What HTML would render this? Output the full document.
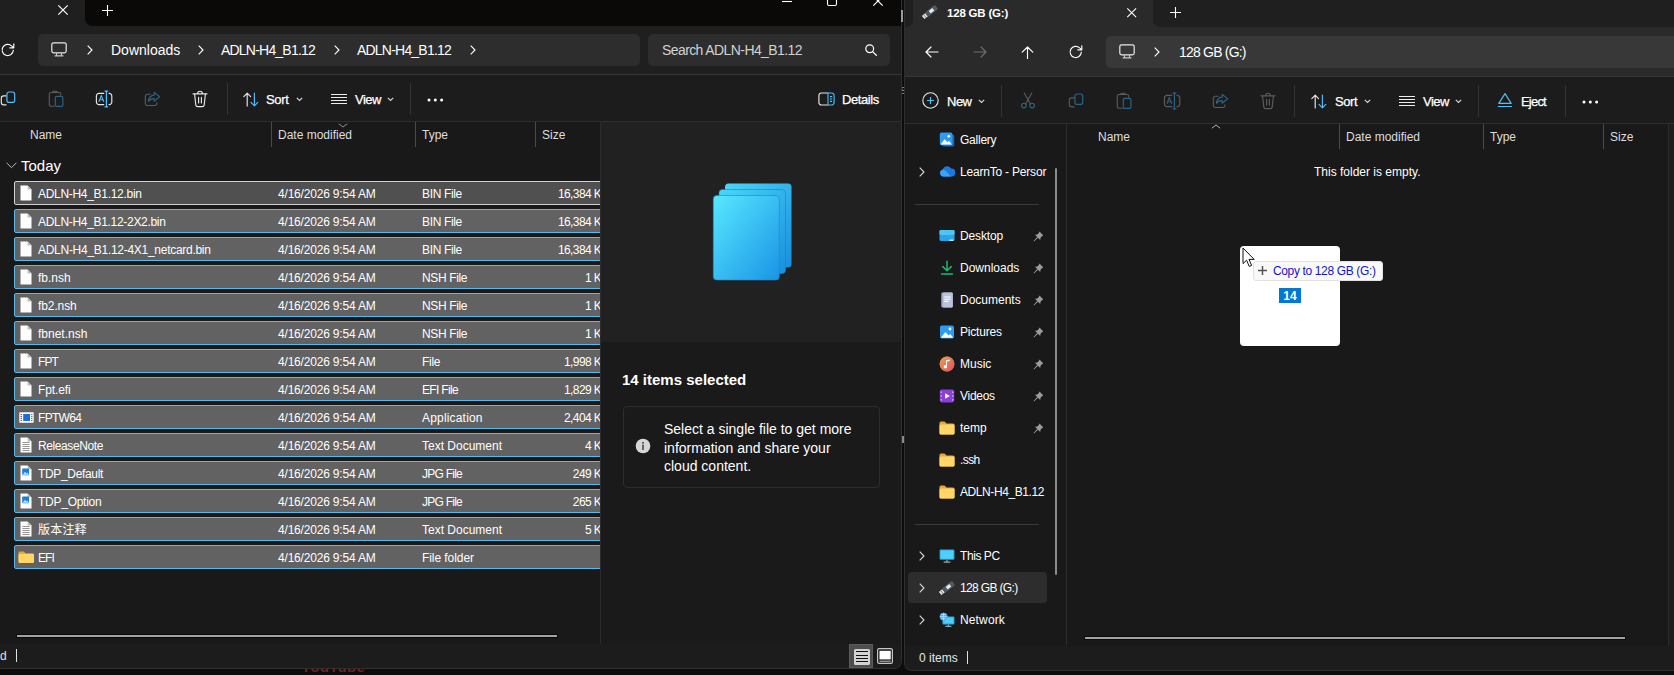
<!DOCTYPE html>
<html lang="en">
<head>
<meta charset="utf-8">
<title>File Explorer</title>
<style>
*{box-sizing:border-box;margin:0;padding:0}
html,body{width:1674px;height:675px;overflow:hidden;background:#0c0c0c}
body{position:relative;font-family:"Liberation Sans","Noto Sans CJK SC",sans-serif;font-size:12px;color:#fff;-webkit-font-smoothing:antialiased}
.a{position:absolute}
.t{position:absolute;white-space:nowrap;line-height:16px;height:16px}
svg{position:absolute;overflow:visible}
/* ---------- left window ---------- */
#L{position:absolute;left:0;top:0;width:902px;height:669px;background:#1f1f1f;overflow:hidden;border-right:1px solid #303030;border-bottom:1px solid #303030;border-bottom-right-radius:8px}
#L .titlebar{left:85px;top:0;width:816px;height:26px;background:#0b0907;border-bottom-left-radius:7px}
#L .addr{left:38px;top:34px;width:602px;height:32px;background:#2d2d2d;border-radius:5px}
#L .search{left:648px;top:34px;width:242px;height:32px;background:#2d2d2d;border-radius:5px}
#L .cmd{left:0;top:74px;width:901px;height:48px;background:#1c1c1c;border-top:1px solid #363636;border-bottom:1px solid #2e2e2e}
#L .list{left:0;top:122px;width:600px;height:522px;background:#191919}
#L .det1{left:601px;top:122px;width:300px;height:220px;background:#212121}
#L .det2{left:601px;top:342px;width:300px;height:302px;background:#1a1a1a}
#L .status{left:0;top:644px;width:901px;height:25px;background:#1c1c1c}
.bc{font-size:14px;line-height:18px;height:18px;color:#fff}
.hd{color:#dedede}
.sb{font-size:13px;-webkit-text-stroke:0.25px #fff}
.dt{font-size:14px;line-height:18px;height:18px;color:#fff}
.colsep{position:absolute;width:1px;background:#4a4a4a}
.row{position:absolute;left:14px;width:600px;height:24px;background:#626262;border:1px solid #58baee;border-radius:2px}
.row.first{background:#505050;border-color:#d0d0d0}
.row .t{top:4px}
.row .n{left:23px}
.row .d{left:263px;letter-spacing:-0.19px}
.row .ty{left:407px}
.row .s{right:4.4px;text-align:right;letter-spacing:-0.6px}
/* ---------- right window ---------- */
#R{position:absolute;left:904px;top:0;width:770px;height:671px;background:#2a2a2a;overflow:hidden;border-left:1px solid #2f2f2f;border-bottom:1px solid #2f2f2f;border-bottom-left-radius:8px}
#R .tabstrip{left:0;top:0;width:769px;height:27px;background:#1f1f1f}
#R .tab{left:8px;top:0;width:240px;height:27px;background:#2a2a2a}
#R .addr{left:201px;top:36px;width:580px;height:32px;background:#383838;border-radius:5px}
#R .cmd{left:0;top:76px;width:769px;height:48px;background:#1c1c1c;border-top:1px solid #363636;border-bottom:1px solid #2e2e2e}
#R .body{left:0;top:124px;width:769px;height:522px;background:#191919}
#R .status{left:0;top:646px;width:769px;height:27px;background:#1c1c1c}
.si{position:absolute;left:55px;white-space:nowrap;line-height:16px;height:16px;color:#fff}
</style>
</head>
<body>
<div class="t" style="left:301px;top:658px;font-size:15px;font-weight:bold;color:#7c1d1d;line-height:18px;height:18px;letter-spacing:0.3px">YouTube</div>
<!-- ======================= LEFT WINDOW ======================= -->
<div id="L">
  <div class="a titlebar"></div>
  <div class="a addr"></div>
  <div class="a search"></div>
  <div class="a cmd"></div>
  <div class="a list"></div>
  <div class="a det1"></div>
  <div class="a det2"></div>
  <div class="a status"></div>
    <!-- tab close + new tab -->
  <svg style="left:58px;top:5px" width="10" height="10" viewBox="0 0 10 10"><path d="M0.3 0.3L9.7 9.7M9.7 0.3L0.3 9.7" stroke="#fff" stroke-width="1.2" fill="none"/></svg>
  <svg style="left:102px;top:5px" width="11" height="11" viewBox="0 0 11 11"><path d="M5.5 0V11M0 5.5H11" stroke="#fff" stroke-width="1.1" fill="none"/></svg>
  <!-- window controls (partly cropped) -->
  <svg style="left:782px;top:0" width="10" height="4" viewBox="0 0 10 4"><path d="M0 1.5H10" stroke="#fff" stroke-width="1.1"/></svg>
  <svg style="left:827px;top:-4px" width="10" height="10" viewBox="0 0 10 10"><rect x="0.5" y="0.5" width="9" height="9" rx="1.6" stroke="#fff" stroke-width="1.1" fill="none"/></svg>
  <svg style="left:873px;top:-4px" width="10" height="10" viewBox="0 0 10 10"><path d="M0.3 0.3L9.7 9.7M9.7 0.3L0.3 9.7" stroke="#fff" stroke-width="1.2" fill="none"/></svg>
  <!-- refresh -->
  <svg style="left:1px;top:43px" width="14" height="14" viewBox="0 0 14 14"><path d="M12.3 7.2A5.6 5.6 0 1 1 10.6 2.9L12.6 4.6M12.8 0.8V4.8H8.8" stroke="#fff" stroke-width="1.15" fill="none" stroke-linecap="round" stroke-linejoin="round"/></svg>
  <!-- breadcrumb -->
  <svg style="left:51px;top:42px" width="16" height="15" viewBox="0 0 16 15"><rect x="0.8" y="0.8" width="14.4" height="10" rx="1.8" stroke="#e8e8e8" stroke-width="1.2" fill="none"/><path d="M5.5 11V13.6M10.5 11V13.6M3.6 13.9H12.4" stroke="#c8c8c8" stroke-width="1.1" fill="none"/></svg>
  <svg style="left:87px;top:45px" width="6" height="10" viewBox="0 0 6 10"><path d="M0.7 0.7L5 5L0.7 9.3" stroke="#fff" stroke-width="1.1" fill="none"/></svg>
  <div class="t bc" style="left:111px;top:41px">Downloads</div>
  <svg style="left:198px;top:45px" width="6" height="10" viewBox="0 0 6 10"><path d="M0.7 0.7L5 5L0.7 9.3" stroke="#fff" stroke-width="1.1" fill="none"/></svg>
  <div class="t bc" style="left:221px;top:41px;letter-spacing:-0.79px">ADLN-H4_B1.12</div>
  <svg style="left:334px;top:45px" width="6" height="10" viewBox="0 0 6 10"><path d="M0.7 0.7L5 5L0.7 9.3" stroke="#fff" stroke-width="1.1" fill="none"/></svg>
  <div class="t bc" style="left:357px;top:41px;letter-spacing:-0.79px">ADLN-H4_B1.12</div>
  <svg style="left:470px;top:45px" width="6" height="10" viewBox="0 0 6 10"><path d="M0.7 0.7L5 5L0.7 9.3" stroke="#fff" stroke-width="1.1" fill="none"/></svg>
  <!-- search -->
  <div class="t bc" style="left:662px;top:41px;color:#d2d2d2;letter-spacing:-0.59px">Search ADLN-H4_B1.12</div>
  <svg style="left:865px;top:44px" width="12" height="12" viewBox="0 0 12 12"><circle cx="4.7" cy="4.7" r="3.9" stroke="#fff" stroke-width="1.2" fill="none"/><path d="M7.6 7.6L11.3 11.3" stroke="#fff" stroke-width="1.3" stroke-linecap="round"/></svg>
  <!-- command bar icons -->
  <svg style="left:0;top:91px" width="16" height="16" viewBox="0 0 16 16"><path d="M6.5 13.8H3.6A2.3 2.3 0 0 1 1.3 11.5V7.2A2.3 2.3 0 0 1 3.6 4.9H6.5" stroke="#e6e6e6" stroke-width="1.15" fill="none"/><rect x="6.9" y="1" width="7.8" height="10.4" rx="2.2" stroke="#4cc2ff" stroke-width="1.2" fill="none"/></svg>
  <svg style="left:48px;top:90px" width="16" height="18" viewBox="0 0 16 18"><path d="M6.6 16.2H3A1.7 1.7 0 0 1 1.3 14.5V4.2A1.7 1.7 0 0 1 3 2.5H11A1.7 1.7 0 0 1 12.7 4.2V5.6" stroke="#5c5c5c" stroke-width="1.1" fill="none"/><path d="M4.6 2.3A1.2 1.2 0 0 1 5.8 1.3H8.2A1.2 1.2 0 0 1 9.4 2.3" stroke="#5c5c5c" stroke-width="1.1" fill="none"/><rect x="7.3" y="6.3" width="7.6" height="10" rx="1.4" stroke="#2b6485" stroke-width="1.15" fill="none"/></svg>
  <svg style="left:95px;top:90px" width="18" height="18" viewBox="0 0 18 18"><path d="M9.2 3.4H4A2.6 2.6 0 0 0 1.4 6V12A2.6 2.6 0 0 0 4 14.6H9.2M13.6 3.4H14.2A2.6 2.6 0 0 1 16.8 6V12A2.6 2.6 0 0 1 14.2 14.6H13.6" stroke="#e6e6e6" stroke-width="1.15" fill="none"/><path d="M11.4 1.2V16.8M9.6 1.2H13.2M9.6 16.8H13.2" stroke="#4cc2ff" stroke-width="1.2" fill="none"/><path d="M3.8 11.8L6.3 5.6L8.8 11.8M4.7 9.8H7.9" stroke="#4cc2ff" stroke-width="1.1" fill="none"/></svg>
  <svg style="left:144px;top:91px" width="17" height="16" viewBox="0 0 17 16"><path d="M6.4 3.2H3.4A2.1 2.1 0 0 0 1.3 5.3V12.4A2.1 2.1 0 0 0 3.4 14.5H10.8A2.1 2.1 0 0 0 12.9 12.4V11.6" stroke="#5c5c5c" stroke-width="1.1" fill="none"/><path d="M10.2 1.4L15.6 5.8L10.2 10.2V7.6C7.4 7.5 5.6 8.4 4.4 10.4C4.7 6.8 6.8 4.4 10.2 4.1Z" stroke="#2b6485" stroke-width="1.1" fill="none" stroke-linejoin="round"/></svg>
  <svg style="left:192px;top:90px" width="16" height="18" viewBox="0 0 16 18"><path d="M1 3.8H15M5.6 3.6A2.4 2.4 0 0 1 10.4 3.6M2.6 4.2L3.8 14.9A1.9 1.9 0 0 0 5.7 16.6H10.3A1.9 1.9 0 0 0 12.2 14.9L13.4 4.2M6.6 7.4V13M9.4 7.4V13" stroke="#e6e6e6" stroke-width="1.15" fill="none" stroke-linecap="round"/></svg>
  <div class="a" style="left:227px;top:83px;width:1px;height:32px;background:#333"></div>
  <!-- sort -->
  <svg style="left:243px;top:92px" width="16" height="15" viewBox="0 0 16 15"><path d="M4.2 14V1.2M0.8 4.6L4.2 1.2L7.6 4.6" stroke="#e6e6e6" stroke-width="1.15" fill="none" stroke-linecap="round" stroke-linejoin="round"/><path d="M11.4 1V13.8M8 10.4L11.4 13.8L14.8 10.4" stroke="#4cc2ff" stroke-width="1.15" fill="none" stroke-linecap="round" stroke-linejoin="round"/></svg>
  <div class="t sb" style="left:266px;top:92px;letter-spacing:-0.3px">Sort</div>
  <svg style="left:296px;top:97px" width="7" height="5" viewBox="0 0 7 5"><path d="M0.8 0.8L3.5 3.5L6.2 0.8" stroke="#d4d4d4" stroke-width="1.2" fill="none"/></svg>
  <!-- view -->
  <svg style="left:331px;top:94px" width="16" height="10" viewBox="0 0 16 10"><path d="M0 0.5H16M0 3.5H16M0 6.5H16M0 9.5H16" stroke="#ececec" stroke-width="1" fill="none"/></svg>
  <div class="t sb" style="left:355px;top:92px;letter-spacing:-0.5px">View</div>
  <svg style="left:387px;top:97px" width="7" height="5" viewBox="0 0 7 5"><path d="M0.8 0.8L3.5 3.5L6.2 0.8" stroke="#d4d4d4" stroke-width="1.2" fill="none"/></svg>
  <div class="a" style="left:410px;top:83px;width:1px;height:32px;background:#333"></div>
  <svg style="left:427px;top:98px" width="17" height="4" viewBox="0 0 17 4"><circle cx="2" cy="2" r="1.5" fill="#fff"/><circle cx="8.3" cy="2" r="1.5" fill="#fff"/><circle cx="14.6" cy="2" r="1.5" fill="#fff"/></svg>
  <!-- details toggle -->
  <svg style="left:818px;top:92px" width="17" height="14" viewBox="0 0 17 14"><path d="M10 1H3.4A2.5 2.5 0 0 0 0.9 3.5V10.5A2.5 2.5 0 0 0 3.4 13H10" stroke="#e6e6e6" stroke-width="1.15" fill="none"/><path d="M10 1H13.6A2.5 2.5 0 0 1 16.1 3.5V10.5A2.5 2.5 0 0 1 13.6 13H10ZM12 4.6H14.2M12 7H14.2M12 9.4H14.2" stroke="#4cc2ff" stroke-width="1.1" fill="none"/></svg>
  <div class="t sb" style="left:842px;top:92px;letter-spacing:-0.4px">Details</div>

    <svg width="0" height="0" style="left:0;top:0">
    <defs>
      <symbol id="i-file" viewBox="0 0 14 16"><path d="M1.5 0.5H8.6L12.5 4.4V15.5H1.5Z" fill="#fdfdfd"/><path d="M8.6 0.5V4.4H12.5Z" fill="#bdbdbd"/></symbol>
      <symbol id="i-txt" viewBox="0 0 14 16"><path d="M1.5 0.5H8.6L12.5 4.4V15.5H1.5Z" fill="#fdfdfd"/><path d="M8.6 0.5V4.4H12.5Z" fill="#bdbdbd"/><path d="M3.4 5.5H10.6M3.4 7.5H10.6M3.4 9.5H10.6M3.4 11.5H10.6M3.4 13.5H10.6" stroke="#8a8a8a" stroke-width="0.9"/></symbol>
      <symbol id="i-jpg" viewBox="0 0 14 16"><path d="M1.5 0.5H8.6L12.5 4.4V15.5H1.5Z" fill="#fdfdfd"/><path d="M8.6 0.5V4.4H12.5Z" fill="#bdbdbd"/><rect x="3.2" y="3.4" width="6.8" height="6.8" rx="0.8" fill="#1a7fd6"/><path d="M3.6 9.8L6 6.8L7.6 8.4L8.6 7.6L9.8 9.8Z" fill="#bfe3ff"/></symbol>
      <symbol id="i-app" viewBox="0 0 15 11"><rect x="0.3" y="0.3" width="14.4" height="10.4" rx="0.6" fill="#fdfdfd"/><rect x="4.2" y="2" width="6.8" height="7" fill="#1a6fd0"/><path d="M1.6 2.6H3M1.6 4.6H3M1.6 6.6H3M1.6 8.6H3M12.2 2.6H13.4M12.2 4.6H13.4M12.2 6.6H13.4M12.2 8.6H13.4" stroke="#3a3a3a" stroke-width="0.9"/></symbol>
      <symbol id="i-folder" viewBox="0 0 16 14"><path d="M0.5 2A1.5 1.5 0 0 1 2 0.5H5.6L7.4 2.4H14A1.5 1.5 0 0 1 15.5 3.9V12A1.5 1.5 0 0 1 14 13.5H2A1.5 1.5 0 0 1 0.5 12Z" fill="#e9a93a"/><path d="M0.5 4.6A1.2 1.2 0 0 1 1.7 3.4H14.3A1.2 1.2 0 0 1 15.5 4.6V12A1.5 1.5 0 0 1 14 13.5H2A1.5 1.5 0 0 1 0.5 12Z" fill="#ffd667"/></symbol>
    </defs>
  </svg>
  <div class="a" style="left:0;top:122px;width:600px;height:521px;overflow:hidden">
  <div class="t hd" style="left:30px;top:5px">Name</div>
  <div class="t hd" style="left:278px;top:5px">Date modified</div>
  <div class="t hd" style="left:422px;top:5px">Type</div>
  <div class="t hd" style="left:542px;top:5px">Size</div>
  <svg style="left:338px;top:1px" width="10" height="5" viewBox="0 0 10 5"><path d="M0.8 0.8L5 4L9.2 0.8" stroke="#9a9a9a" stroke-width="0.9" fill="none"/></svg>
  <div class="colsep" style="left:271px;top:0;height:25px"></div>
  <div class="colsep" style="left:415px;top:0;height:25px"></div>
  <div class="colsep" style="left:535px;top:0;height:25px"></div>
  <svg style="left:6px;top:40px" width="11" height="7" viewBox="0 0 11 7"><path d="M0.6 0.8L5.5 5.7L10.4 0.8" stroke="#bdbdbd" stroke-width="1" fill="none"/></svg>
  <div class="t" style="left:21px;top:35px;font-size:15px;line-height:18px;height:18px">Today</div>
  <div class="row first" style="top:59px"><svg style="left:4px;top:3px" width="14" height="16"><use href="#i-file"/></svg><div class="t n" style="letter-spacing:-0.3px">ADLN-H4_B1.12.bin</div><div class="t d">4/16/2026 9:54 AM</div><div class="t ty" style="letter-spacing:-0.35px">BIN File</div><div class="t s">16,384 KB</div></div>
  <div class="row" style="top:87px"><svg style="left:4px;top:3px" width="14" height="16"><use href="#i-file"/></svg><div class="t n" style="letter-spacing:-0.31px">ADLN-H4_B1.12-2X2.bin</div><div class="t d">4/16/2026 9:54 AM</div><div class="t ty" style="letter-spacing:-0.35px">BIN File</div><div class="t s">16,384 KB</div></div>
  <div class="row" style="top:115px"><svg style="left:4px;top:3px" width="14" height="16"><use href="#i-file"/></svg><div class="t n" style="letter-spacing:-0.28px">ADLN-H4_B1.12-4X1_netcard.bin</div><div class="t d">4/16/2026 9:54 AM</div><div class="t ty" style="letter-spacing:-0.35px">BIN File</div><div class="t s">16,384 KB</div></div>
  <div class="row" style="top:143px"><svg style="left:4px;top:3px" width="14" height="16"><use href="#i-file"/></svg><div class="t n">fb.nsh</div><div class="t d">4/16/2026 9:54 AM</div><div class="t ty" style="letter-spacing:-0.37px">NSH File</div><div class="t s">1 KB</div></div>
  <div class="row" style="top:171px"><svg style="left:4px;top:3px" width="14" height="16"><use href="#i-file"/></svg><div class="t n" style="letter-spacing:-0.1px">fb2.nsh</div><div class="t d">4/16/2026 9:54 AM</div><div class="t ty" style="letter-spacing:-0.37px">NSH File</div><div class="t s">1 KB</div></div>
  <div class="row" style="top:199px"><svg style="left:4px;top:3px" width="14" height="16"><use href="#i-file"/></svg><div class="t n">fbnet.nsh</div><div class="t d">4/16/2026 9:54 AM</div><div class="t ty" style="letter-spacing:-0.37px">NSH File</div><div class="t s">1 KB</div></div>
  <div class="row" style="top:227px"><svg style="left:4px;top:3px" width="14" height="16"><use href="#i-file"/></svg><div class="t n" style="letter-spacing:-0.95px">FPT</div><div class="t d">4/16/2026 9:54 AM</div><div class="t ty" style="letter-spacing:-0.3px">File</div><div class="t s">1,998 KB</div></div>
  <div class="row" style="top:255px"><svg style="left:4px;top:3px" width="14" height="16"><use href="#i-file"/></svg><div class="t n" style="letter-spacing:-0.1px">Fpt.efi</div><div class="t d">4/16/2026 9:54 AM</div><div class="t ty" style="letter-spacing:-0.66px">EFI File</div><div class="t s">1,829 KB</div></div>
  <div class="row" style="top:283px"><svg style="left:4px;top:6px" width="15" height="11"><use href="#i-app"/></svg><div class="t n" style="letter-spacing:-0.7px">FPTW64</div><div class="t d">4/16/2026 9:54 AM</div><div class="t ty" style="letter-spacing:0.18px">Application</div><div class="t s">2,404 KB</div></div>
  <div class="row" style="top:311px"><svg style="left:4px;top:3px" width="14" height="16"><use href="#i-txt"/></svg><div class="t n" style="letter-spacing:-0.4px">ReleaseNote</div><div class="t d">4/16/2026 9:54 AM</div><div class="t ty">Text Document</div><div class="t s">4 KB</div></div>
  <div class="row" style="top:339px"><svg style="left:4px;top:3px" width="14" height="16"><use href="#i-jpg"/></svg><div class="t n" style="letter-spacing:-0.34px">TDP_Default</div><div class="t d">4/16/2026 9:54 AM</div><div class="t ty" style="letter-spacing:-0.75px">JPG File</div><div class="t s">249 KB</div></div>
  <div class="row" style="top:367px"><svg style="left:4px;top:3px" width="14" height="16"><use href="#i-jpg"/></svg><div class="t n" style="letter-spacing:-0.26px">TDP_Option</div><div class="t d">4/16/2026 9:54 AM</div><div class="t ty" style="letter-spacing:-0.75px">JPG File</div><div class="t s">265 KB</div></div>
  <div class="row" style="top:395px"><svg style="left:4px;top:3px" width="14" height="16"><use href="#i-txt"/></svg><div class="t n" style="letter-spacing:0.2px">版本注释</div><div class="t d">4/16/2026 9:54 AM</div><div class="t ty">Text Document</div><div class="t s">5 KB</div></div>
  <div class="row" style="top:423px"><svg style="left:3px;top:4.5px" width="16.5" height="12.5" viewBox="0 0 16 14" preserveAspectRatio="none"><use href="#i-folder"/></svg><div class="t n" style="letter-spacing:-0.9px">EFI</div><div class="t d">4/16/2026 9:54 AM</div><div class="t ty" style="letter-spacing:-0.07px">File folder</div><div class="t s"></div></div>
  <div class="a" style="left:17px;top:513px;width:540px;height:2px;background:#a2a2a2;box-shadow:0 0 0 1px #0b0b0b"></div>
  </div>
  <div class="a" style="left:600px;top:122px;width:1px;height:521px;background:#2b2b2b"></div>
  <div class="t" style="left:0;top:648px;color:#e0e0e0">d</div>
  <div class="a" style="left:16px;top:649px;width:1px;height:13px;background:#e0e0e0"></div>
  <div class="a" style="left:849px;top:644px;width:24px;height:24px;background:#4d4d4d;border:1px solid #5c5c5c"></div>
  <svg style="left:854px;top:649px" width="16" height="16" viewBox="0 0 16 16"><rect x="0" y="0" width="16" height="16" rx="1.6" fill="#d2d2d2"/><path d="M2 2.5H14M2 6.5H14M2 9.5H14M2 12.5H14" stroke="#111" stroke-width="1"/></svg>
  <svg style="left:877px;top:648px" width="16" height="16" viewBox="0 0 16 16"><rect x="0.6" y="0.6" width="14.8" height="14.8" rx="1.6" fill="none" stroke="#c6c6c6" stroke-width="1.2"/><rect x="2.5" y="2.8" width="11.2" height="8.6" fill="#fff"/><path d="M2.5 13.2H13.7" stroke="#d8d8d8" stroke-width="0.9"/></svg>

    <svg style="left:713px;top:183px" width="79" height="98" viewBox="0 0 79 98">
    <defs>
      <linearGradient id="g1" x1="0" y1="0" x2="1" y2="1"><stop offset="0" stop-color="#58e8ff"/><stop offset="1" stop-color="#1a94e6"/></linearGradient>
      <linearGradient id="g2" x1="0" y1="0" x2="1" y2="1"><stop offset="0" stop-color="#4ad6fa"/><stop offset="1" stop-color="#1a8fdd"/></linearGradient>
    </defs>
    <rect x="12" y="0.5" width="66.5" height="84" rx="3.5" fill="url(#g2)"/>
    <rect x="6" y="6.5" width="66.5" height="84" rx="3.5" fill="url(#g2)" stroke="#1b7fc4" stroke-width="0.6"/>
    <rect x="0.3" y="12.5" width="66" height="84.5" rx="3.5" fill="url(#g1)" stroke="#1b86cf" stroke-width="0.6"/>
  </svg>
  <div class="t" style="left:622px;top:371px;font-size:15px;font-weight:bold;line-height:18px;height:18px">14 items selected</div>
  <div class="a" style="left:623px;top:406px;width:257px;height:82px;border:1px solid #2d2d2d;border-radius:4px"></div>
  <svg style="left:635px;top:438px" width="16" height="16" viewBox="0 0 16 16"><circle cx="8" cy="8" r="7.3" fill="#d6d6d6"/><circle cx="8" cy="4.8" r="0.85" fill="#1c1c1c"/><path d="M8 7.2V11.4" stroke="#1c1c1c" stroke-width="1.2" stroke-linecap="round"/></svg>
  <div class="t dt" style="left:664px;top:420px">Select a single file to get more</div>
  <div class="t dt" style="left:664px;top:439px">information and share your</div>
  <div class="t dt" style="left:664px;top:457px">cloud content.</div>

</div>
<!-- window gap -->
<div class="a" style="left:902px;top:0;width:3px;height:675px;background:#0d0d0d;z-index:-1"></div>
<div class="a" style="left:901px;top:10px;width:2px;height:12px;background:#9a9a9a"></div>
<div class="a" style="left:902px;top:436px;width:2px;height:7px;background:#8a8a8a"></div>
<div class="a" style="left:901.5px;top:82px;width:3px;height:16px;overflow:hidden"><div class="t" style="left:-1.5px;top:0;font-size:13px;color:#9a9a9a">s</div></div>
<!-- ======================= RIGHT WINDOW ======================= -->
<div id="R">
  <div class="a tabstrip"></div>
  <div class="a tab"></div>
  <div class="a addr"></div>
  <div class="a cmd"></div>
  <div class="a body"></div>
  <div class="a status"></div>
    <!-- tab -->
  <div class="a" style="left:0;top:19px;width:8px;height:8px;background:#2a2a2a"></div><div class="a" style="left:0;top:11px;width:8px;height:16px;background:#1f1f1f;border-bottom-right-radius:7px"></div>
  <div class="a" style="left:248px;top:19px;width:8px;height:8px;background:#2a2a2a"></div><div class="a" style="left:248px;top:0;width:521px;height:27px;background:#1f1f1f;border-bottom-left-radius:7px"></div>
  <svg style="left:17px;top:5px" width="16" height="14" viewBox="0 0 16 14"><g transform="rotate(-39 8 7) translate(0 -1)"><rect x="-0.8" y="6" width="4.6" height="4" fill="#ececec"/><rect x="0.6" y="7" width="1.2" height="0.9" fill="#555"/><rect x="0.6" y="8.6" width="1.2" height="0.9" fill="#555"/><rect x="3.4" y="5.3" width="12.8" height="5.4" rx="1.1" fill="#4e5963"/><rect x="7.6" y="6.4" width="4.6" height="3.2" fill="#e8e8e8"/></g></svg>
  <div class="t" style="left:42px;top:5px;font-weight:bold;font-size:11.5px;letter-spacing:-0.2px">128 GB (G:)</div>
  <svg style="left:222px;top:7.5px" width="9.4" height="9.4" viewBox="0 0 10 10"><path d="M0.3 0.3L9.7 9.7M9.7 0.3L0.3 9.7" stroke="#fff" stroke-width="1.2" fill="none"/></svg>
  <svg style="left:265px;top:7px" width="11" height="11" viewBox="0 0 11 11"><path d="M5.5 0V11M0 5.5H11" stroke="#fff" stroke-width="1.1" fill="none"/></svg>
  <!-- nav -->
  <svg style="left:20px;top:46px" width="14" height="12" viewBox="0 0 14 12"><path d="M13 6H1M6 1L1 6L6 11" stroke="#fff" stroke-width="1.15" fill="none" stroke-linecap="round" stroke-linejoin="round"/></svg>
  <svg style="left:68px;top:46px" width="14" height="12" viewBox="0 0 14 12"><path d="M1 6H13M8 1L13 6L8 11" stroke="#6e6e6e" stroke-width="1.15" fill="none" stroke-linecap="round" stroke-linejoin="round"/></svg>
  <svg style="left:116px;top:46px" width="13" height="13" viewBox="0 0 13 13"><path d="M6.5 12.4V1M1.2 6.2L6.5 1L11.8 6.2" stroke="#fff" stroke-width="1.15" fill="none" stroke-linecap="round" stroke-linejoin="round"/></svg>
  <svg style="left:164px;top:45px" width="14" height="14" viewBox="0 0 14 14"><path d="M12.3 7.2A5.6 5.6 0 1 1 10.6 2.9L12.6 4.6M12.8 0.8V4.8H8.8" stroke="#fff" stroke-width="1.15" fill="none" stroke-linecap="round" stroke-linejoin="round"/></svg>
  <svg style="left:214px;top:44px" width="16" height="15" viewBox="0 0 16 15"><rect x="0.8" y="0.8" width="14.4" height="10" rx="1.8" stroke="#e8e8e8" stroke-width="1.2" fill="none"/><path d="M5.5 11V13.6M10.5 11V13.6M3.6 13.9H12.4" stroke="#c8c8c8" stroke-width="1.1" fill="none"/></svg>
  <svg style="left:249px;top:47px" width="6" height="10" viewBox="0 0 6 10"><path d="M0.7 0.7L5 5L0.7 9.3" stroke="#fff" stroke-width="1.1" fill="none"/></svg>
  <div class="t bc" style="left:274px;top:43px;letter-spacing:-0.8px">128 GB (G:)</div>
  <!-- command bar -->
  <svg style="left:17px;top:92px" width="17" height="17" viewBox="0 0 17 17"><circle cx="8.5" cy="8.5" r="7.7" stroke="#e6e6e6" stroke-width="1.1" fill="none"/><path d="M8.5 5V12M5 8.5H12" stroke="#4cc2ff" stroke-width="1.2"/></svg>
  <div class="t sb" style="left:42px;top:94px;letter-spacing:-0.5px">New</div>
  <svg style="left:73px;top:99px" width="7" height="5" viewBox="0 0 7 5"><path d="M0.8 0.8L3.5 3.5L6.2 0.8" stroke="#d4d4d4" stroke-width="1.2" fill="none"/></svg>
  <div class="a" style="left:96px;top:85px;width:1px;height:32px;background:#333"></div>
  <svg style="left:115px;top:92px" width="16" height="17" viewBox="0 0 16 17"><path d="M4.2 1L10.6 12.2M11.8 1L5.4 12.2" stroke="#5c5c5c" stroke-width="1.1" fill="none" stroke-linecap="round"/><circle cx="3.9" cy="13.6" r="2.3" stroke="#2b6485" stroke-width="1.1" fill="none"/><circle cx="12.1" cy="13.6" r="2.3" stroke="#2b6485" stroke-width="1.1" fill="none"/></svg>
  <svg style="left:163px;top:93px" width="16" height="16" viewBox="0 0 16 16"><path d="M6.5 13.8H3.6A2.3 2.3 0 0 1 1.3 11.5V7.2A2.3 2.3 0 0 1 3.6 4.9H6.5" stroke="#5c5c5c" stroke-width="1.15" fill="none"/><rect x="6.9" y="1" width="7.8" height="10.4" rx="2.2" stroke="#2b6485" stroke-width="1.2" fill="none"/></svg>
  <svg style="left:211px;top:92px" width="16" height="18" viewBox="0 0 16 18"><path d="M6.6 16.2H3A1.7 1.7 0 0 1 1.3 14.5V4.2A1.7 1.7 0 0 1 3 2.5H11A1.7 1.7 0 0 1 12.7 4.2V5.6" stroke="#5c5c5c" stroke-width="1.1" fill="none"/><path d="M4.6 2.3A1.2 1.2 0 0 1 5.8 1.3H8.2A1.2 1.2 0 0 1 9.4 2.3" stroke="#5c5c5c" stroke-width="1.1" fill="none"/><rect x="7.3" y="6.3" width="7.6" height="10" rx="1.4" stroke="#2b6485" stroke-width="1.15" fill="none"/></svg>
  <svg style="left:258px;top:92px" width="18" height="18" viewBox="0 0 18 18"><path d="M9.2 3.4H4A2.6 2.6 0 0 0 1.4 6V12A2.6 2.6 0 0 0 4 14.6H9.2M13.6 3.4H14.2A2.6 2.6 0 0 1 16.8 6V12A2.6 2.6 0 0 1 14.2 14.6H13.6" stroke="#5c5c5c" stroke-width="1.15" fill="none"/><path d="M11.4 1.2V16.8M9.6 1.2H13.2M9.6 16.8H13.2" stroke="#2b6485" stroke-width="1.2" fill="none"/><path d="M3.8 11.8L6.3 5.6L8.8 11.8M4.7 9.8H7.9" stroke="#2b6485" stroke-width="1.1" fill="none"/></svg>
  <svg style="left:307px;top:93px" width="17" height="16" viewBox="0 0 17 16"><path d="M6.4 3.2H3.4A2.1 2.1 0 0 0 1.3 5.3V12.4A2.1 2.1 0 0 0 3.4 14.5H10.8A2.1 2.1 0 0 0 12.9 12.4V11.6" stroke="#5c5c5c" stroke-width="1.1" fill="none"/><path d="M10.2 1.4L15.6 5.8L10.2 10.2V7.6C7.4 7.5 5.6 8.4 4.4 10.4C4.7 6.8 6.8 4.4 10.2 4.1Z" stroke="#2b6485" stroke-width="1.1" fill="none" stroke-linejoin="round"/></svg>
  <svg style="left:355px;top:92px" width="16" height="18" viewBox="0 0 16 18"><path d="M1 3.8H15M5.6 3.6A2.4 2.4 0 0 1 10.4 3.6M2.6 4.2L3.8 14.9A1.9 1.9 0 0 0 5.7 16.6H10.3A1.9 1.9 0 0 0 12.2 14.9L13.4 4.2M6.6 7.4V13M9.4 7.4V13" stroke="#5c5c5c" stroke-width="1.15" fill="none" stroke-linecap="round"/></svg>
  <div class="a" style="left:389px;top:85px;width:1px;height:32px;background:#333"></div>
  <svg style="left:406px;top:94px" width="16" height="15" viewBox="0 0 16 15"><path d="M4.2 14V1.2M0.8 4.6L4.2 1.2L7.6 4.6" stroke="#e6e6e6" stroke-width="1.15" fill="none" stroke-linecap="round" stroke-linejoin="round"/><path d="M11.4 1V13.8M8 10.4L11.4 13.8L14.8 10.4" stroke="#4cc2ff" stroke-width="1.15" fill="none" stroke-linecap="round" stroke-linejoin="round"/></svg>
  <div class="t sb" style="left:430px;top:94px;letter-spacing:-0.4px">Sort</div>
  <svg style="left:459px;top:99px" width="7" height="5" viewBox="0 0 7 5"><path d="M0.8 0.8L3.5 3.5L6.2 0.8" stroke="#d4d4d4" stroke-width="1.2" fill="none"/></svg>
  <svg style="left:494px;top:96px" width="16" height="10" viewBox="0 0 16 10"><path d="M0 0.5H16M0 3.5H16M0 6.5H16M0 9.5H16" stroke="#ececec" stroke-width="1" fill="none"/></svg>
  <div class="t sb" style="left:518px;top:94px;letter-spacing:-0.5px">View</div>
  <svg style="left:550px;top:99px" width="7" height="5" viewBox="0 0 7 5"><path d="M0.8 0.8L3.5 3.5L6.2 0.8" stroke="#d4d4d4" stroke-width="1.2" fill="none"/></svg>
  <div class="a" style="left:573px;top:85px;width:1px;height:32px;background:#333"></div>
  <svg style="left:592px;top:93px" width="16" height="16" viewBox="0 0 16 16"><path d="M8 0.6L14.2 10.4H1.8Z" stroke="#4cc2ff" stroke-width="1.15" fill="none" stroke-linejoin="round"/><path d="M1.4 13.5H14.6" stroke="#4cc2ff" stroke-width="1.2" stroke-linecap="round"/></svg>
  <div class="t sb" style="left:616px;top:94px;letter-spacing:-0.8px">Eject</div>
  <div class="a" style="left:660px;top:85px;width:1px;height:32px;background:#333"></div>
  <svg style="left:677px;top:100px" width="17" height="4" viewBox="0 0 17 4"><circle cx="2" cy="2" r="1.5" fill="#fff"/><circle cx="8.3" cy="2" r="1.5" fill="#fff"/><circle cx="14.6" cy="2" r="1.5" fill="#fff"/></svg>

    <svg width="0" height="0" style="left:0;top:0"><defs><linearGradient id="gm" x1="0" y1="0" x2="1" y2="1"><stop offset="0" stop-color="#f0a04a"/><stop offset="1" stop-color="#d9506a"/></linearGradient></defs></svg>
  <div class="a" style="left:3px;top:572px;width:139px;height:31px;background:#2d2d2d;border-radius:4px"></div>
  <svg style="left:34px;top:132px" width="16" height="16" viewBox="0 0 16 16"><rect x="3.2" y="2.6" width="12" height="12" rx="1.6" fill="#1668b8"/><rect x="0.8" y="0.6" width="12.6" height="12.6" rx="1.8" fill="#2f9bf0"/><path d="M1.6 12.4L5.6 7.2L8.4 10.2L10 8.8L12.8 12.4Z" fill="#fff"/><circle cx="9.8" cy="4.2" r="1.3" fill="#fff"/></svg><div class="si" style="top:132px;letter-spacing:-0.24px">Gallery</div>
  <svg style="left:34px;top:164px" width="16" height="16" viewBox="0 0 16 16"><path d="M4.2 12.6A3.6 3.6 0 0 1 3.6 5.5A4.6 4.6 0 0 1 12 4.6A3.9 3.9 0 0 1 12.6 12.6Z" fill="#1a7ae0"/><path d="M4.2 12.6A3.6 3.6 0 0 1 3.4 5.8C5 5.6 6.4 6.2 7.4 7.4L12 12.6Z" fill="#3ea2f5"/></svg><div class="si" style="top:164px;letter-spacing:-0.2px;width:87px;overflow:hidden">LearnTo - Persor</div>
  <svg style="left:14px;top:167px" width="6" height="10" viewBox="0 0 6 10"><path d="M0.7 0.7L5 5L0.7 9.3" stroke="#d8d8d8" stroke-width="1.1" fill="none"/></svg>
  <svg style="left:34px;top:228px" width="16" height="16" viewBox="0 0 16 16"><rect x="0.5" y="2" width="15" height="11" rx="1.4" fill="#2aa5e8"/><rect x="0.5" y="2" width="15" height="5" rx="1.4" fill="#4fc3f7"/><rect x="10.5" y="11.6" width="4" height="1.2" fill="#e8f6ff"/></svg><div class="si" style="top:228px;letter-spacing:-0.14px">Desktop</div>
  <svg style="left:128px;top:231px" width="11" height="11" viewBox="0 0 11 11"><path d="M6.4 0.6L10.4 4.6L9.2 5L7.6 6.6L7.2 9L5 6.8L1 10.4L0.6 10L4.2 6L2 3.8L4.4 3.4L6 1.8Z" fill="#9d9d9d"/></svg>
  <svg style="left:34px;top:260px" width="16" height="16" viewBox="0 0 16 16"><path d="M8 1.2V10.6M3.8 6.6L8 10.8L12.2 6.6" stroke="#22b573" stroke-width="1.5" fill="none" stroke-linecap="round" stroke-linejoin="round"/><path d="M2.6 14H13.4" stroke="#22b573" stroke-width="1.6" stroke-linecap="round"/></svg><div class="si" style="top:260px">Downloads</div>
  <svg style="left:128px;top:263px" width="11" height="11" viewBox="0 0 11 11"><path d="M6.4 0.6L10.4 4.6L9.2 5L7.6 6.6L7.2 9L5 6.8L1 10.4L0.6 10L4.2 6L2 3.8L4.4 3.4L6 1.8Z" fill="#9d9d9d"/></svg>
  <svg style="left:34px;top:292px" width="16" height="16" viewBox="0 0 16 16"><rect x="2.2" y="0.6" width="11.6" height="14.8" rx="1.4" fill="#8e9cc0"/><rect x="3.6" y="0.6" width="10.2" height="14.8" rx="1.2" fill="#b9c3dd"/><path d="M5.2 5H11.6M5.2 7.2H11.6M5.2 9.4H9.4" stroke="#fff" stroke-width="1.1"/></svg><div class="si" style="top:292px">Documents</div>
  <svg style="left:128px;top:295px" width="11" height="11" viewBox="0 0 11 11"><path d="M6.4 0.6L10.4 4.6L9.2 5L7.6 6.6L7.2 9L5 6.8L1 10.4L0.6 10L4.2 6L2 3.8L4.4 3.4L6 1.8Z" fill="#9d9d9d"/></svg>
  <svg style="left:34px;top:324px" width="16" height="16" viewBox="0 0 16 16"><rect x="1" y="1.4" width="14" height="13.2" rx="1.8" fill="#2f9bf0"/><path d="M1.8 13.8L6.4 8L9.6 11.4L11.2 10L14.2 13.8Z" fill="#fff"/><circle cx="11" cy="5" r="1.4" fill="#fff"/></svg><div class="si" style="top:324px;letter-spacing:-0.2px">Pictures</div>
  <svg style="left:128px;top:327px" width="11" height="11" viewBox="0 0 11 11"><path d="M6.4 0.6L10.4 4.6L9.2 5L7.6 6.6L7.2 9L5 6.8L1 10.4L0.6 10L4.2 6L2 3.8L4.4 3.4L6 1.8Z" fill="#9d9d9d"/></svg>
  <svg style="left:34px;top:356px" width="16" height="16" viewBox="0 0 16 16"><circle cx="8" cy="8" r="7.4" fill="#e8734f"/><circle cx="8" cy="8" r="7.4" fill="url(#gm)"/><path d="M7 4.2L10.6 3.4V5L8 5.6V10.6A1.7 1.7 0 1 1 7 9.2Z" fill="#fff"/></svg><div class="si" style="top:356px">Music</div>
  <svg style="left:128px;top:359px" width="11" height="11" viewBox="0 0 11 11"><path d="M6.4 0.6L10.4 4.6L9.2 5L7.6 6.6L7.2 9L5 6.8L1 10.4L0.6 10L4.2 6L2 3.8L4.4 3.4L6 1.8Z" fill="#9d9d9d"/></svg>
  <svg style="left:34px;top:388px" width="16" height="16" viewBox="0 0 16 16"><rect x="0.8" y="1.6" width="14.4" height="12.8" rx="1.8" fill="#8a3fd9"/><path d="M6.2 5.2L10.8 8L6.2 10.8Z" fill="#fff"/><path d="M2.2 3.4V5M2.2 7.2V8.8M2.2 11V12.6M13.8 3.4V5M13.8 7.2V8.8M13.8 11V12.6" stroke="#d9b8ff" stroke-width="1.2"/></svg><div class="si" style="top:388px;letter-spacing:-0.27px">Videos</div>
  <svg style="left:128px;top:391px" width="11" height="11" viewBox="0 0 11 11"><path d="M6.4 0.6L10.4 4.6L9.2 5L7.6 6.6L7.2 9L5 6.8L1 10.4L0.6 10L4.2 6L2 3.8L4.4 3.4L6 1.8Z" fill="#9d9d9d"/></svg>
  <svg style="left:34px;top:420px" width="16" height="16" viewBox="0 0 16 16"><path d="M0.5 3A1.5 1.5 0 0 1 2 1.5H5.6L7.4 3.4H14A1.5 1.5 0 0 1 15.5 4.9V13A1.5 1.5 0 0 1 14 14.5H2A1.5 1.5 0 0 1 0.5 13Z" fill="#e9a93a"/><path d="M0.5 5.6A1.2 1.2 0 0 1 1.7 4.4H14.3A1.2 1.2 0 0 1 15.5 5.6V13A1.5 1.5 0 0 1 14 14.5H2A1.5 1.5 0 0 1 0.5 13Z" fill="#ffd667"/></svg><div class="si" style="top:420px">temp</div>
  <svg style="left:128px;top:423px" width="11" height="11" viewBox="0 0 11 11"><path d="M6.4 0.6L10.4 4.6L9.2 5L7.6 6.6L7.2 9L5 6.8L1 10.4L0.6 10L4.2 6L2 3.8L4.4 3.4L6 1.8Z" fill="#9d9d9d"/></svg>
  <svg style="left:34px;top:452px" width="16" height="16" viewBox="0 0 16 16"><path d="M0.5 3A1.5 1.5 0 0 1 2 1.5H5.6L7.4 3.4H14A1.5 1.5 0 0 1 15.5 4.9V13A1.5 1.5 0 0 1 14 14.5H2A1.5 1.5 0 0 1 0.5 13Z" fill="#e9a93a"/><path d="M0.5 5.6A1.2 1.2 0 0 1 1.7 4.4H14.3A1.2 1.2 0 0 1 15.5 5.6V13A1.5 1.5 0 0 1 14 14.5H2A1.5 1.5 0 0 1 0.5 13Z" fill="#ffd667"/></svg><div class="si" style="top:452px;letter-spacing:-0.6px">.ssh</div>
  <svg style="left:34px;top:484px" width="16" height="16" viewBox="0 0 16 16"><path d="M0.5 3A1.5 1.5 0 0 1 2 1.5H5.6L7.4 3.4H14A1.5 1.5 0 0 1 15.5 4.9V13A1.5 1.5 0 0 1 14 14.5H2A1.5 1.5 0 0 1 0.5 13Z" fill="#e9a93a"/><path d="M0.5 5.6A1.2 1.2 0 0 1 1.7 4.4H14.3A1.2 1.2 0 0 1 15.5 5.6V13A1.5 1.5 0 0 1 14 14.5H2A1.5 1.5 0 0 1 0.5 13Z" fill="#ffd667"/></svg><div class="si" style="top:484px;letter-spacing:-0.42px">ADLN-H4_B1.12</div>
  <svg style="left:34px;top:548px" width="16" height="16" viewBox="0 0 16 16"><rect x="0.6" y="1.4" width="14.8" height="10.4" rx="1.2" fill="#2aa5e8"/><rect x="1.6" y="2.4" width="12.8" height="8.4" fill="#4fd0fb"/><path d="M8 11.8V13.8M4.6 14.2H11.4" stroke="#9aa4ae" stroke-width="1.3"/></svg><div class="si" style="top:548px;letter-spacing:-0.43px">This PC</div>
  <svg style="left:14px;top:551px" width="6" height="10" viewBox="0 0 6 10"><path d="M0.7 0.7L5 5L0.7 9.3" stroke="#d8d8d8" stroke-width="1.1" fill="none"/></svg>
  <svg style="left:34px;top:580px" width="16" height="16" viewBox="0 0 16 16"><g transform="rotate(-39 8 8)"><rect x="-0.8" y="6" width="4.6" height="4" fill="#ececec"/><rect x="0.6" y="7" width="1.2" height="0.9" fill="#555"/><rect x="0.6" y="8.6" width="1.2" height="0.9" fill="#555"/><rect x="3.4" y="5.3" width="12.8" height="5.4" rx="1.1" fill="#4e5963"/><rect x="7.6" y="6.4" width="4.6" height="3.2" fill="#e8e8e8"/></g></svg><div class="si" style="top:580px;letter-spacing:-0.65px">128 GB (G:)</div>
  <svg style="left:14px;top:583px" width="6" height="10" viewBox="0 0 6 10"><path d="M0.7 0.7L5 5L0.7 9.3" stroke="#d8d8d8" stroke-width="1.1" fill="none"/></svg>
  <svg style="left:34px;top:612px" width="16" height="16" viewBox="0 0 16 16"><rect x="3.4" y="4.4" width="12" height="8" rx="1" fill="#2aa5e8"/><rect x="4.4" y="5.4" width="10" height="6" fill="#4fd0fb"/><path d="M9.4 12.4V14M6.4 14.4H12.4" stroke="#9aa4ae" stroke-width="1.2"/><circle cx="4.6" cy="4.6" r="3.9" fill="#3fa9e8"/><path d="M0.9 4.6H8.3M4.6 0.8V8.4M2 2.2C3.6 3.2 5.6 3.2 7.2 2.2M2 7C3.6 6 5.6 6 7.2 7" stroke="#c8ecff" stroke-width="0.7" fill="none"/></svg><div class="si" style="top:612px;letter-spacing:0.14px">Network</div>
  <svg style="left:14px;top:615px" width="6" height="10" viewBox="0 0 6 10"><path d="M0.7 0.7L5 5L0.7 9.3" stroke="#d8d8d8" stroke-width="1.1" fill="none"/></svg>
  <div class="a" style="left:10px;top:204px;width:124px;height:1px;background:#3a3a3a"></div>
  <div class="a" style="left:10px;top:524px;width:124px;height:1px;background:#3a3a3a"></div>
  <div class="a" style="left:150px;top:168px;width:2px;height:407px;background:#8c8c8c;border-radius:1px"></div>
  <div class="a" style="left:161px;top:124px;width:1px;height:521px;background:#2e2e2e"></div>

    <div class="t hd" style="left:193px;top:129px">Name</div>
  <div class="t hd" style="left:441px;top:129px">Date modified</div>
  <div class="t hd" style="left:585px;top:129px">Type</div>
  <div class="t hd" style="left:705px;top:129px">Size</div>
  <svg style="left:306px;top:124px" width="10" height="5" viewBox="0 0 10 5"><path d="M0.8 4.2L5 1L9.2 4.2" stroke="#bdbdbd" stroke-width="0.9" fill="none"/></svg>
  <div class="colsep" style="left:434px;top:124px;height:25px"></div>
  <div class="colsep" style="left:578px;top:124px;height:25px"></div>
  <div class="colsep" style="left:698px;top:124px;height:25px"></div>
  <div class="a" style="left:763px;top:124px;width:6px;height:522px;background:#1d1d1d;border-left:1px solid #2c2c2c"></div>
  <div class="t" style="left:409px;top:164px">This folder is empty.</div>
  <div class="a" style="left:180px;top:637px;width:540px;height:2px;background:#a2a2a2;box-shadow:0 0 0 1px #0b0b0b"></div>
  <div class="t" style="left:14px;top:650px;color:#e6e6e6">0 items</div>
  <div class="a" style="left:62px;top:651px;width:1px;height:13px;background:#e0e0e0"></div>

</div>
<div class="a" style="left:1240px;top:246px;width:100px;height:100px;background:#fff;border-radius:4px"></div>
<div class="a" style="left:1279px;top:288px;width:22px;height:15px;background:#0078d4"></div>
<div class="t" style="left:1279px;top:287.5px;width:22px;text-align:center;font-weight:bold;color:#fff">14</div>
<div class="a" style="left:1253px;top:261px;width:130px;height:20px;background:#f9f9f9;border:1px solid #e2e2e2;border-radius:3px"></div>
<svg style="left:1258px;top:266px" width="9" height="9" viewBox="0 0 9 9"><path d="M4.5 0V9M0 4.5H9" stroke="#555" stroke-width="1.5"/></svg>
<div class="t" style="left:1273px;top:263px;color:#1414c8;letter-spacing:-0.36px">Copy to 128 GB (G:)</div>
<svg style="left:1241.6px;top:247px" width="14" height="21" viewBox="0 0 14 21"><path d="M1 1V16.6L4.6 13.2L7.2 19.4L9.6 18.4L7 12.4H12.2Z" fill="#fff" stroke="#111" stroke-width="1" stroke-linejoin="round"/></svg>

</body>
</html>
